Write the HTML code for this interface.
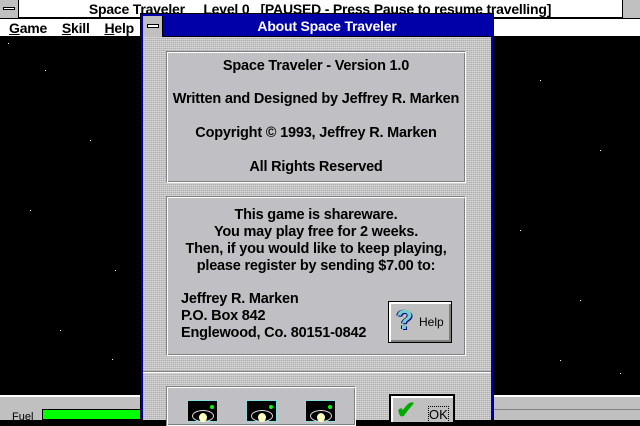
<!DOCTYPE html>
<html><head><style>
*{margin:0;padding:0;box-sizing:border-box}
body{width:640px;height:420px;background:#000;position:relative;overflow:hidden;font-family:"Liberation Sans",sans-serif}
.abs{position:absolute}
.tex{background-color:#c0c0c0;background-image:repeating-linear-gradient(0deg,rgba(255,255,255,.35) 0 1px,transparent 1px 2px),repeating-linear-gradient(90deg,rgba(128,128,128,.25) 0 1px,transparent 1px 2px)}
.panel{background:#c0c0c4;border:1px solid #fff;border-top-color:#808080;border-left-color:#808080;box-shadow:inset 1px 1px 0 #fff,inset -1px -1px 0 #808080}
.t{font-size:14.5px;font-weight:bold;color:#000;text-align:center;letter-spacing:-.2px}
.star{position:absolute;width:1px;height:1px;background:#fff}
.ic{position:absolute;top:400px;width:31px;height:22px;background:#000;border:1px solid #8dd}
.ic i{position:absolute;left:4px;top:9px;width:22px;height:12px;border:1px solid #ddd;border-radius:50%}
.ic b{position:absolute;left:11px;top:12px;width:8px;height:9px;background:#ffffc0;border-radius:50%}
.ic s{position:absolute;left:22px;top:4px;width:4px;height:4px;background:#0f0;border-radius:50%}
</style></head><body>
<div class="abs" style="left:0;top:0;width:640px;height:18px;background:#fff;border-bottom:1px solid #000"></div>
<div class="abs" style="left:0;top:0;width:19px;height:18px;background:#c0c0c0;border-right:1px solid #000"><div class="abs" style="left:3px;top:7px;width:12px;height:3px;background:#fff;border:1px solid #000"></div></div>
<div class="abs" style="left:622px;top:0;width:18px;height:18px;background:#c0c0c0;border-left:1px solid #000"></div>
<div class="abs t" style="left:20px;top:1px;width:600px;font-size:14px;white-space:nowrap">Space Traveler &nbsp;&nbsp;&nbsp;&nbsp;Level 0 &nbsp;&nbsp;[PAUSED - Press Pause to resume travelling]</div>
<div class="abs" style="left:0;top:19px;width:640px;height:18px;background:#fff;border-bottom:1px solid #000"></div>
<div class="abs t" style="left:9px;top:20px;text-align:left;font-size:14px;white-space:nowrap"><u>G</u>ame &nbsp;&nbsp;&nbsp;<u>S</u>kill &nbsp;&nbsp;&nbsp;<u>H</u>elp</div>
<div class="star" style="left:8px;top:43px"></div><div class="star" style="left:45px;top:70px"></div><div class="star" style="left:90px;top:140px"></div><div class="star" style="left:30px;top:210px"></div><div class="star" style="left:115px;top:270px"></div><div class="star" style="left:60px;top:330px"></div><div class="star" style="left:112px;top:359px"></div><div class="star" style="left:540px;top:80px"></div><div class="star" style="left:600px;top:150px"></div><div class="star" style="left:520px;top:230px"></div><div class="star" style="left:580px;top:300px"></div><div class="star" style="left:620px;top:373px"></div><div class="star" style="left:560px;top:360px"></div>
<div class="abs" style="left:0;top:395px;width:140px;height:25px;background:#c0c0c0;border-top:2px solid #fff"></div>
<div class="abs" style="left:12px;top:411px;font-size:11px">Fuel</div>
<div class="abs" style="left:42px;top:409px;width:100px;height:11px;background:#00ff00;border:1px solid #000"></div>
<div class="abs" style="left:494px;top:395px;width:146px;height:25px;background:#c0c0c0;border-top:2px solid #fff"></div>
<div class="abs" style="left:494px;top:409px;width:146px;height:11px;background:#c0c0c0;border-top:1px solid #808080"></div>
<div class="abs" style="left:140px;top:13px;width:354px;height:407px;background:#0000a8;border:1px solid #000"></div>
<div class="abs tex" style="left:143px;top:37px;width:348px;height:383px"></div>
<div class="abs" style="left:143px;top:16px;width:348px;height:21px;background:#0000a8;border-bottom:1px solid #000"></div>
<div class="abs" style="left:143px;top:16px;width:20px;height:21px;background:#c0c0c0;border-right:1px solid #000"><div class="abs" style="left:4px;top:8px;width:12px;height:4px;background:#fff;border:1px solid #000"></div></div>
<div class="abs t" style="left:163px;top:18px;width:328px;color:#fff;font-size:14px">About Space Traveler</div>
<div class="abs panel" style="left:166px;top:51px;width:300px;height:132px"></div>
<div class="abs t" style="left:166px;top:58px;width:300px">Space Traveler - Version 1.0</div>
<div class="abs t" style="left:166px;top:91px;width:300px">Written and Designed by Jeffrey R. Marken</div>
<div class="abs t" style="left:166px;top:125px;width:300px">Copyright © 1993, Jeffrey R. Marken</div>
<div class="abs t" style="left:166px;top:159px;width:300px">All Rights Reserved</div>
<div class="abs panel" style="left:166px;top:196px;width:300px;height:160px"></div>
<div class="abs t" style="left:166px;top:207px;width:300px;line-height:17px">This game is shareware.<br>You may play free for 2 weeks.<br>Then, if you would like to keep playing,<br>please register by sending $7.00 to:</div>
<div class="abs t" style="left:181px;top:291px;text-align:left;line-height:17px">Jeffrey R. Marken<br>P.O. Box 842<br>Englewood, Co. 80151-0842</div>
<div class="abs" style="left:388px;top:301px;width:64px;height:42px;border:1px solid #000;background:#c0c0c0;box-shadow:inset 2px 2px 0 #fff,inset -2px -2px 0 #808080"></div>
<div class="abs" style="left:396px;top:304px;font-size:28px;font-weight:bold;color:#7cc;text-shadow:1px 1px 0 #008,-1px 0 0 #008">?</div>
<div class="abs" style="left:419px;top:315px;font-size:12px">Help</div>
<div class="abs" style="left:143px;top:371px;width:348px;height:2px;background:#808080;border-bottom:1px solid #fff"></div>
<div class="abs panel" style="left:166px;top:386px;width:190px;height:40px"></div>
<div class="ic" style="left:187px"><i></i><b></b><s></s></div>
<div class="ic" style="left:246px"><i></i><b></b><s></s></div>
<div class="ic" style="left:305px"><i></i><b></b><s></s></div>
<div class="abs" style="left:389px;top:394px;width:66px;height:30px;border:2px solid #000;background:#c0c0c0;box-shadow:inset 2px 2px 0 #fff"></div>
<div class="abs" style="left:396px;top:396px;font-size:24px;font-weight:bold;color:#0a0">✔</div>
<div class="abs" style="left:428px;top:406px;font-size:13px;border:1px dotted #000">OK</div>
</body></html>
